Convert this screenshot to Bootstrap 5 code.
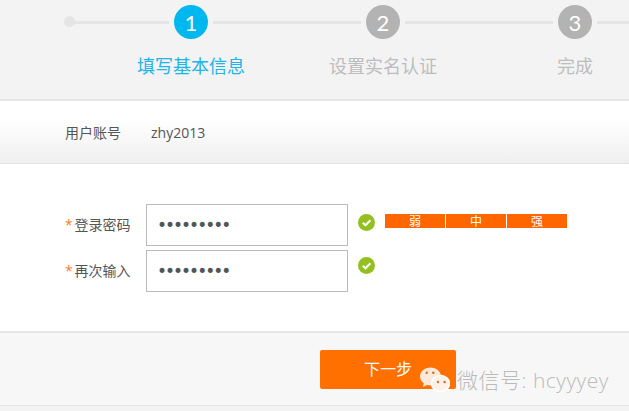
<!DOCTYPE html>
<html lang="zh-CN">
<head>
  <meta charset="UTF-8">
  <title>填写基本信息</title>
  <meta name="viewport" content="width=device-width, initial-scale=1">
  <link href="https://cdn.jsdelivr.net/npm/bootstrap@5.3.3/dist/css/bootstrap.min.css" rel="stylesheet">
  <style>
    body {
      background-color: #f3f3f3;
      font-family: "Open Sans", "Noto Sans CJK SC", sans-serif;
      color: #555;
      height: 411px;
      overflow: hidden;
    }
    .page { position: relative; width: 629px; height: 411px; overflow: hidden; }

    /* stepper */
    .steps { height: 101px; background: #f3f3f3; border-bottom: 2px solid #e6e6e6; padding: 5px 0 0 64px; }
    .track { height: 34px; width: 565px; }
    .track-dot { width: 11px; height: 11px; border-radius: 50%; background: #e5e5e5; margin-top: -2px; flex-shrink: 0; }
    .track-line { height: 3px; background: #e5e5e5; margin-right: 5px; margin-left: 5px; flex-shrink: 0; }
    .line-a { width: 95px; margin-left: -1px; }
    .line-b { width: 148px; }
    .line-c { width: 32px; margin-right: 0; }
    .step-num {
      width: 34px; height: 34px; border-radius: 50%;
      background: #b3b3b3; color: #fff; font-family: "Lato", sans-serif; font-size: 22px; font-weight: 400;
      flex-shrink: 0;
    }
    .step-num.on { background: #00b7ee; }
    .step-labels { margin-left: 73px; margin-top: 15px; gap: 84px; }
    .step-label { width: 108px; flex-shrink: 0; text-align: center; font-size: 18px; line-height: 24px; color: #bdbdbd; }
    .step-label.on { color: #20b4e8; }

    /* account row */
    .account-row {
      height: 63px;
      padding-left: 65px;
      background: linear-gradient(#fff 30%, #efefef);
      border-bottom: 1px solid #e3e3e3;
      font-size: 14px;
    }
    .account-name { width: 86px; }
    .account-val { font-size: 14px; }

    /* form */
    .pw-form { height: 167px; background: #fff; padding: 40px 0 0 65px; }
    .pw-row { height: 42px; margin-bottom: 4px; }
    .pw-label { width: 81px; font-size: 14px; line-height: 42px; color: #555; }
    .req { display: inline-block; width: 9.5px; color: #ff7b2e; }
    .pw-input.form-control {
      width: 202px; height: 42px; border: 1px solid #bbb; border-radius: 0;
      padding: 0 10px; font-size: 17px; letter-spacing: -2px; color: #555;
      box-shadow: none; font-family: "DejaVu Sans", sans-serif;
    }
    .pw-check { width: 17px; height: 17px; margin-left: 10px; flex-shrink: 0; }
    .check-top { margin-top: 10px; }
    .check-low { margin-top: 7px; }
    .strength { width: 182px; height: 14px; margin: 10px 0 0 10px; gap: 1px; }
    .strength-cell { flex: 1; background: #ff6600; color: #fff; font-size: 12px; line-height: 16px; text-align: center; }

    /* footer */
    .foot { height: 75px; background: #f7f7f7; border-top: 2px solid #e6e6e6; border-bottom: 1px solid #e6e6e6; padding: 17px 0 0 320px; }
    .next-btn.btn {
      width: 136px; height: 39px; padding: 0; border: 0; border-radius: 2px;
      background: #ff7000; color: #fff; font-size: 16px; line-height: 39px;
    }

    /* watermark over the footer */
    .watermark { position: absolute; left: 420px; top: 367px; }
    .wm-text { font-size: 21px; font-weight: 300; line-height: 27px; color: #bbb; letter-spacing: .5px; margin-left: 7px; white-space: nowrap; }
  </style>
</head>
<body>
<div class="page">

  <div class="steps">
    <div class="track d-flex align-items-center">
      <div class="track-dot"></div>
      <div class="track-line line-a"></div>
      <div class="step-num on d-flex align-items-center justify-content-center">1</div>
      <div class="track-line line-b"></div>
      <div class="step-num d-flex align-items-center justify-content-center">2</div>
      <div class="track-line line-b"></div>
      <div class="step-num d-flex align-items-center justify-content-center">3</div>
      <div class="track-line line-c"></div>
    </div>
    <div class="step-labels d-flex">
      <div class="step-label on">填写基本信息</div>
      <div class="step-label">设置实名认证</div>
      <div class="step-label">完成</div>
    </div>
  </div>

  <div class="account-row d-flex align-items-center">
    <div class="account-name">用户账号</div>
    <div class="account-val">zhy2013</div>
  </div>

  <form class="pw-form">
    <div class="pw-row d-flex">
      <label class="pw-label"><span class="req">*</span>登录密码</label>
      <input class="pw-input form-control" type="password" value="123456789">
      <svg class="pw-check check-top" viewBox="0 0 17 17"><circle cx="8.500" cy="8.500" r="8.500" fill="#93c01f"/><path d="M4.800 8.700l2.700 2.600 4.900-5" fill="none" stroke="#fff" stroke-width="2.200"/></svg>
      <div class="strength d-flex">
        <div class="strength-cell">弱</div>
        <div class="strength-cell">中</div>
        <div class="strength-cell">强</div>
      </div>
    </div>
    <div class="pw-row d-flex">
      <label class="pw-label"><span class="req">*</span>再次输入</label>
      <input class="pw-input form-control" type="password" value="123456789">
      <svg class="pw-check check-low" viewBox="0 0 17 17"><circle cx="8.500" cy="8.500" r="8.500" fill="#93c01f"/><path d="M4.800 8.700l2.700 2.600 4.900-5" fill="none" stroke="#fff" stroke-width="2.200"/></svg>
    </div>
  </form>

  <div class="foot">
    <button type="button" class="next-btn btn">下一步</button>
  </div>

  <div class="watermark d-flex align-items-center">
    <svg width="30" height="27" viewBox="0 0 30 27">
      <path d="M10.500 0.500C4.700 0.500 0 4.500 0 9.500c0 2.800 1.500 5.200 3.800 6.800L2.800 20l4.300-2.100c1.100.3 2.200.5 3.400.5 5.800 0 10.500-4 10.500-8.900S16.300 0.500 10.500 0.500z" fill="#fde9d8"/>
      <path d="M25 23.500l2.500 3-.2-4.500z" fill="#fdf0e6"/>
      <ellipse cx="20.500" cy="16.500" rx="9" ry="8" fill="#fdf0e6" stroke="#fff" stroke-width="1.500"/>
      <circle cx="6.700" cy="5.800" r="1.200" fill="#c8703a"/><circle cx="13.300" cy="5.800" r="1.200" fill="#c8703a"/>
      <circle cx="18" cy="15" r="1.200" fill="#c8703a"/><circle cx="24.600" cy="15" r="1.200" fill="#c8703a"/>
    </svg>
    <div class="wm-text">微信号: hcyyyey</div>
  </div>

</div>
</body>
</html>
